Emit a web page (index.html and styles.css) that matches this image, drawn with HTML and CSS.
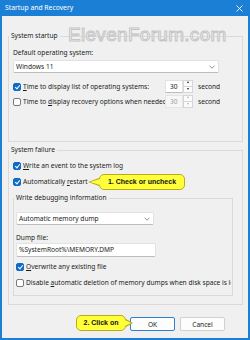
FILE: index.html
```html
<!DOCTYPE html>
<html lang="en">
<head>
    <meta charset="UTF-8">
    <title>Startup and Recovery</title>
    <link rel="stylesheet" href="styles.css">
</head>
<body>
    <div class="window">
        <!-- Title bar -->
        <div class="titlebar">
            <span class="title">Startup and Recovery</span>
            <svg class="close" width="7" height="7" viewBox="0 0 7 7">
                <path d="M0.5 0.5 L6.5 6.5 M6.5 0.5 L0.5 6.5" stroke="#fff" stroke-width="0.9" fill="none"/>
            </svg>
        </div>

        <div class="content">
            <!-- System startup -->
            <fieldset class="group">
                <legend>System startup</legend>
                <div class="gbody startup">
                    <div class="label first">Default operating system:</div>
                    <div class="select os">
                        <span>Windows 11</span>
                        <svg class="chev" width="6" height="4" viewBox="0 0 6 4"><path d="M0.5 0.8 L3 3.2 L5.5 0.8" stroke="#666" stroke-width="0.7" fill="none"/></svg>
                    </div>
                    <div class="row spin-row">
                        <span class="cb on"></span>
                        <span class="text wide"><u>T</u>ime to display list of operating systems:</span>
                        <span class="spin">
                            <span class="spin-val">30</span>
                            <span class="spin-btns"><i class="up"></i><i class="down"></i></span>
                        </span>
                        <span class="unit">seconds</span>
                    </div>
                    <div class="row spin-row second">
                        <span class="cb"></span>
                        <span class="text wide">Time to <u>d</u>isplay recovery options when needed:</span>
                        <span class="spin off">
                            <span class="spin-val">30</span>
                            <span class="spin-btns"><i class="up"></i><i class="down"></i></span>
                        </span>
                        <span class="unit">seconds</span>
                    </div>
                </div>
            </fieldset>

            <!-- System failure -->
            <fieldset class="group failure">
                <legend>System failure</legend>
                <div class="gbody">
                    <div class="row check-row first">
                        <span class="cb on"></span>
                        <span class="text"><u>W</u>rite an event to the system log</span>
                    </div>
                    <div class="row check-row">
                        <span class="cb on"></span>
                        <span class="text">Automatically <u>r</u>estart</span>
                    </div>

                    <fieldset class="group inner">
                        <legend>Write debugging information</legend>
                        <div class="gbody">
                            <div class="select dump">
                                <span>Automatic memory dump</span>
                                <svg class="chev" width="6" height="4" viewBox="0 0 6 4"><path d="M0.5 0.8 L3 3.2 L5.5 0.8" stroke="#666" stroke-width="0.7" fill="none"/></svg>
                            </div>
                            <div class="label dump-label">Dump file:</div>
                            <div class="input">%SystemRoot%\MEMORY.DMP</div>
                            <div class="row check-row overwrite">
                                <span class="cb on"></span>
                                <span class="text"><u>O</u>verwrite any existing file</span>
                            </div>
                            <div class="row check-row clip">
                                <span class="cb"></span>
                                <span class="text">Disable <u>a</u>utomatic deletion of memory dumps when disk space is low</span>
                            </div>
                        </div>
                    </fieldset>
                </div>
            </fieldset>

            <!-- Dialog buttons -->
            <div class="buttons">
                <button class="btn default">OK</button>
                <button class="btn">Cancel</button>
            </div>
        </div>

        <!-- Watermark and annotations -->
        <div class="watermark">ElevenForum.com</div>
        <div class="callout callout-left">1. Check or uncheck</div>
        <div class="callout callout-right">2. Click on</div>
    </div>
</body>
</html>
```

FILE: styles.css
```css
/* Basic styling */
* {
    box-sizing: border-box;
}

body {
    margin: 0;
    font-family: "Noto Sans", sans-serif;
    font-size: 6.6px;
    color: #1b1b1b;
    background: #fff;
}

.window {
    position: relative;
    width: 250px;
    height: 340px;
    background: #f0f0f0;
    border: 2px solid #1c7fd6;
    border-top: 0;
    overflow: hidden;
}

.titlebar {
    height: 16px;
    margin: 0 -2px;
    padding: 0 7px 0 5px;
    background: #1c7fd6;
    color: #fff;
    display: flex;
    align-items: center;
    justify-content: space-between;
}

.title {
    font-size: 6.8px;
    line-height: 8px;
}

.content {
    padding: 16px 5px 0 6px;
}

/* Group boxes */
.group {
    margin: 0;
    padding: 0;
    border: 1px solid #dadada;
    min-width: 0;
}

.group legend {
    margin-left: 0;
    padding: 0 2px;
    height: 8px;
    line-height: 8px;
}

.gbody {
    padding: 0 0 0 4px;
}

.startup {
    padding-bottom: 33px;
}

.failure {
    margin-top: 4px;
}

.failure > .gbody {
    padding-bottom: 8px;
}

.inner {
    margin-top: 8px;
    width: 220px;
}

.inner .gbody {
    padding: 0 0 8px 2px;
}

.label {
    height: 8px;
    line-height: 8px;
}

.label.first {
    margin-top: 9px;
}

.dump-label {
    margin-top: 9px;
}

/* Drop down lists and text boxes */
.select,
.input {
    height: 13px;
    background: #fff;
    border: 1px solid #e2e2e2;
    border-bottom-color: #bcbcbc;
    border-radius: 2px;
    display: flex;
    align-items: center;
    justify-content: space-between;
    padding: 0 3px 0 2px;
    line-height: 8px;
}

.select.os {
    margin-top: 3px;
    width: 206px;
}

.select.dump {
    margin-top: 10px;
    width: 138px;
}

.input {
    margin-top: 1px;
    width: 140px;
    height: 14px;
}

/* Rows with check boxes */
.row {
    display: flex;
    align-items: center;
    white-space: nowrap;
}

.spin-row {
    margin-top: 7px;
    height: 13px;
}

.spin-row.second {
    margin-top: 2px;
}

.check-row {
    margin-top: 7px;
    height: 9px;
}

.check-row.overwrite {
    margin-top: 5px;
}

.check-row.clip {
    width: 215px;
    overflow: hidden;
}

.cb {
    flex: none;
    position: relative;
    width: 8px;
    height: 8px;
    margin-right: 2px;
    background: #fff;
    border: 1px solid #7a7a7a;
    border-radius: 2px;
}

.cb.on {
    background: #0f6cc4;
    border-color: #0f6cc4;
}

.cb.on::after {
    content: "";
    position: absolute;
    left: 2px;
    top: 0px;
    width: 2px;
    height: 4px;
    border: solid #fff;
    border-width: 0 1px 1px 0;
    transform: rotate(40deg);
}

.text {
    line-height: 9px;
}

.text.wide {
    width: 142px;
    overflow: hidden;
}

/* Spinner controls */
.spin {
    flex: none;
    display: flex;
    width: 28px;
    height: 13px;
}

.spin-val {
    width: 18px;
    background: #fff;
    border: 1px solid #e2e2e2;
    border-bottom-color: #bcbcbc;
    padding-left: 4px;
    line-height: 11px;
}

.spin-btns {
    width: 10px;
    display: flex;
    flex-direction: column;
}

.spin-btns i {
    flex: 1;
    position: relative;
    background: #fbfbfb;
    border: 1px solid #d6d6d6;
}

.spin-btns i + i {
    border-top: 0;
}

.spin-btns i::after {
    content: "";
    position: absolute;
    left: 3px;
    top: 1px;
    border: 1.5px solid transparent;
}

.spin-btns .up::after {
    border-bottom: 2px solid #222;
    top: -1px;
}

.spin-btns .down::after {
    border-top: 2px solid #222;
    top: 1px;
}

.spin.off .spin-val {
    color: #a0a0a0;
    background: #f7f7f7;
    border-color: #e4e4e4;
}

.spin.off .spin-btns i::after {
    border-bottom-color: #b0b0b0;
    border-top-color: #b0b0b0;
}

.spin.off .spin-btns .up::after {
    border-top-color: transparent;
}

.spin.off .spin-btns .down::after {
    border-bottom-color: transparent;
}

.unit {
    margin-left: 5px;
    width: 22px;
    overflow: hidden;
}

/* Buttons */
.buttons {
    margin-top: 12px;
    margin-right: 18px;
    display: flex;
    justify-content: flex-end;
    gap: 5px;
}

.btn {
    width: 45px;
    height: 14px;
    padding: 0;
    font-family: "Noto Sans", sans-serif;
    font-size: 6.6px;
    color: #1b1b1b;
    background: #fdfdfd;
    border: 1px solid #d0d0d0;
    border-radius: 2px;
}

.btn.default {
    border-color: #2d7fcf;
}

/* Watermark and annotations */
.watermark {
    position: absolute;
    left: 66px;
    top: 24px;
    font-family: "Liberation Sans", sans-serif;
    font-size: 19px;
    color: #fafafa;
    -webkit-text-stroke: 1px #c4c4c4;
    letter-spacing: 0.3px;
}

.callout {
    position: absolute;
    height: 16px;
    line-height: 14px;
    text-align: center;
    font-family: "Liberation Sans", sans-serif;
    font-weight: bold;
    font-size: 7px;
    color: #111;
    background: #ffff3a;
    border: 1px solid #b9ab1c;
    border-radius: 5px;
}

.callout::before,
.callout::after {
    content: "";
    position: absolute;
    border: solid transparent;
}

.callout-left {
    left: 97px;
    top: 174px;
    width: 86px;
}

.callout-left::before {
    left: -12px;
    top: 3px;
    border-width: 4px 11px 4px 0;
    border-right-color: #b9ab1c;
}

.callout-left::after {
    left: -10px;
    top: 4px;
    border-width: 3px 10px 3px 0;
    border-right-color: #ffff3a;
}

.callout-right {
    left: 74px;
    top: 315px;
    width: 50px;
}

.callout-right::before {
    right: -8px;
    top: 3px;
    border-width: 4px 0 4px 7px;
    border-left-color: #b9ab1c;
}

.callout-right::after {
    right: -6px;
    top: 4px;
    border-width: 3px 0 3px 6px;
    border-left-color: #ffff3a;
}
```
